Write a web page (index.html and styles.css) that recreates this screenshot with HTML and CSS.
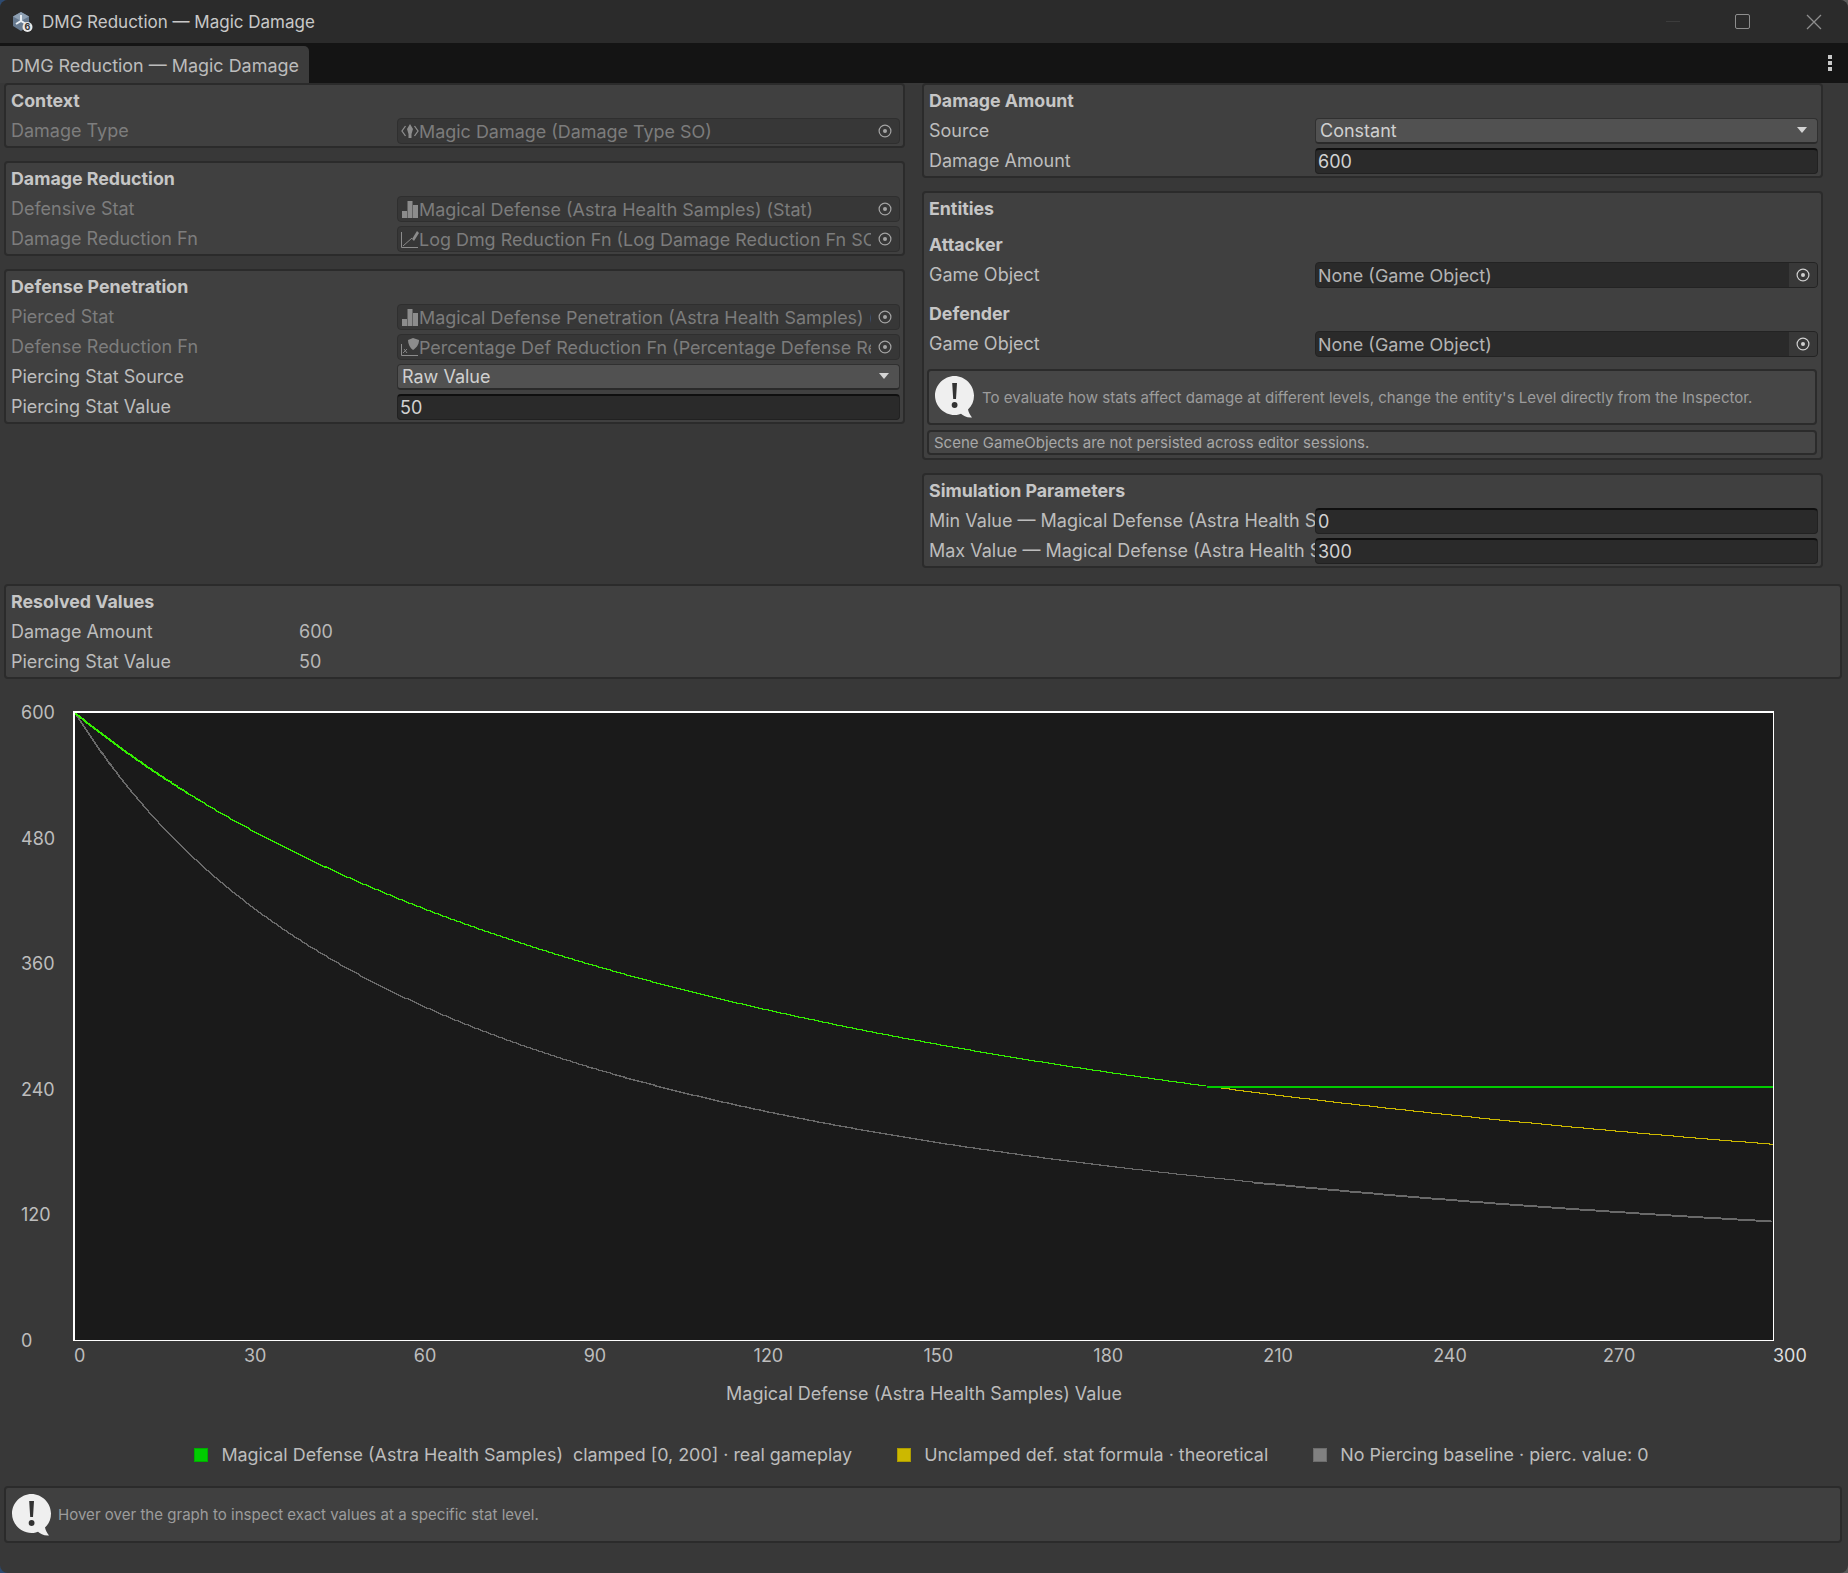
FILE: index.html
```html
<!DOCTYPE html>
<html lang="en">
<head>
    <meta charset="UTF-8">
    <title>DMG Reduction — Magic Damage</title>
    <link rel="stylesheet" href="styles.css">
</head>

<body>
<svg class="sprites" width="0" height="0">
    <symbol id="i-picker" viewBox="0 0 14 14">
        <circle cx="7" cy="7" r="5.9" fill="none" stroke="currentColor" stroke-width="1.2"/>
        <circle cx="7" cy="7" r="2" fill="currentColor"/>
    </symbol>
    <symbol id="i-bars" viewBox="0 0 16 18">
        <rect x="0" y="11" width="5" height="7" fill="currentColor"/>
        <rect x="5.5" y="1" width="5" height="17" fill="currentColor"/>
        <rect x="11" y="5" width="5" height="13" fill="currentColor"/>
    </symbol>
    <symbol id="i-type" viewBox="0 0 18 18">
        <path d="M4.5 4 L1 9 L4.5 14 M13.5 4 L17 9 L13.5 14" fill="none" stroke="currentColor" stroke-width="1.3"/>
        <path d="M9 2 L12 7 L10.5 12 L10.5 16 L7.5 16 L7.5 12 L6 7 Z" fill="currentColor"/>
    </symbol>
    <symbol id="i-graph" viewBox="0 0 18 18">
        <path d="M0.5 2 V17.5 H17" fill="none" stroke="currentColor" stroke-width="1"/>
        <path d="M2 16 L11 8" fill="none" stroke="currentColor" stroke-width="1"/>
        <path d="M11 9 L16 1 L18 3 L13 11 Z" fill="currentColor"/>
    </symbol>
    <symbol id="i-shield" viewBox="0 0 18 18">
        <path d="M0.5 6 V17.5 H17" fill="none" stroke="currentColor" stroke-width="1"/>
        <path d="M2 15 L6 11 M3 11 L6 15" fill="none" stroke="currentColor" stroke-width="0.9"/>
        <path d="M12 0 L18 2 C18 7 15 10 12 12 C9 10 7 6 7 2 Z" fill="currentColor"/>
    </symbol>
    <symbol id="i-help" viewBox="0 0 40 42">
        <path d="M19.5 0 C30 0 39 9 39 19.5 C39 25 37 30 33 33.5 C33.5 36 35 39 37 41.5 C32 42 28 39.5 26 37.8 C24 38.6 22 39 19.5 39 C9 39 0 30 0 19.5 C0 9 9 0 19.5 0 Z" fill="#efefef"/>
        <path d="M17.2 7 H22 L21 23 H18.2 Z" fill="#333"/>
        <circle cx="19.6" cy="29" r="2.9" fill="#333"/>
    </symbol>
</svg>

<div class="window">
    <div class="titlebar">
        <svg class="app-icon" viewBox="0 0 22 22">
            <path d="M10 1 L18 5.5 V15 L10 20 L2 15 V5.5 Z" fill="#66798f"/>
            <path d="M10 1 L18 5.5 L10 10 L2 5.5 Z" fill="#8ea0b3"/>
            <path d="M10 4 V10 M5 13 L10 10 L15 13" stroke="#e8edf2" stroke-width="2" fill="none"/>
            <circle cx="16.5" cy="16" r="5" fill="#e9e9e9"/>
            <text x="16.5" y="19.4" class="app-six">6</text>
        </svg>
        <span class="title-text">DMG Reduction — Magic Damage</span>
        <div class="win-buttons">
            <span class="win-min"></span>
            <span class="win-max"></span>
            <svg class="win-close" viewBox="0 0 16 16"><path d="M1 1 L15 15 M15 1 L1 15" stroke="#8e8e8e" stroke-width="1.3"/></svg>
        </div>
    </div>

    <div class="tabbar">
        <div class="tab">DMG Reduction — Magic Damage</div>
        <div class="kebab"><i></i><i></i><i></i></div>
    </div>

    <div class="columns">
        <div class="col">
            <div class="panel">
                <div class="heading">Context</div>
                <div class="row off">
                    <div class="label">Damage Type</div>
                    <div class="field object"><svg class="ficon"><use href="#i-type"/></svg><span class="ftext">Magic Damage (Damage Type SO)</span><svg class="picker"><use href="#i-picker"/></svg></div>
                </div>
            </div>
            <div class="panel">
                <div class="heading">Damage Reduction</div>
                <div class="row off">
                    <div class="label">Defensive Stat</div>
                    <div class="field object"><svg class="ficon"><use href="#i-bars"/></svg><span class="ftext">Magical Defense (Astra Health Samples) (Stat)</span><svg class="picker"><use href="#i-picker"/></svg></div>
                </div>
                <div class="row off">
                    <div class="label">Damage Reduction Fn</div>
                    <div class="field object"><svg class="ficon"><use href="#i-graph"/></svg><span class="ftext">Log Dmg Reduction Fn (Log Damage Reduction Fn SO)</span><svg class="picker"><use href="#i-picker"/></svg></div>
                </div>
            </div>
            <div class="panel">
                <div class="heading">Defense Penetration</div>
                <div class="row off">
                    <div class="label">Pierced Stat</div>
                    <div class="field object"><svg class="ficon"><use href="#i-bars"/></svg><span class="ftext">Magical Defense Penetration (Astra Health Samples) (Stat)</span><svg class="picker"><use href="#i-picker"/></svg></div>
                </div>
                <div class="row off">
                    <div class="label">Defense Reduction Fn</div>
                    <div class="field object"><svg class="ficon"><use href="#i-shield"/></svg><span class="ftext">Percentage Def Reduction Fn (Percentage Defense Reduction Fn SO)</span><svg class="picker"><use href="#i-picker"/></svg></div>
                </div>
                <div class="row">
                    <div class="label">Piercing Stat Source</div>
                    <div class="field dropdown">Raw Value<span class="caret"></span></div>
                </div>
                <div class="row">
                    <div class="label">Piercing Stat Value</div>
                    <div class="field input">50</div>
                </div>
            </div>
        </div>

        <div class="col">
            <div class="panel">
                <div class="heading">Damage Amount</div>
                <div class="row">
                    <div class="label">Source</div>
                    <div class="field dropdown">Constant<span class="caret"></span></div>
                </div>
                <div class="row">
                    <div class="label">Damage Amount</div>
                    <div class="field input">600</div>
                </div>
            </div>
            <div class="panel">
                <div class="heading">Entities</div>
                <div class="heading sub">Attacker</div>
                <div class="row">
                    <div class="label">Game Object</div>
                    <div class="field object live"><span class="ftext">None (Game Object)</span><svg class="picker"><use href="#i-picker"/></svg></div>
                </div>
                <div class="heading sub second">Defender</div>
                <div class="row">
                    <div class="label">Game Object</div>
                    <div class="field object live"><span class="ftext">None (Game Object)</span><svg class="picker"><use href="#i-picker"/></svg></div>
                </div>
                <div class="helpbox inner">
                    <svg class="help-icon"><use href="#i-help"/></svg>
                    <span>To evaluate how stats affect damage at different levels, change the entity's Level directly from the Inspector.</span>
                </div>
                <div class="notebox">Scene GameObjects are not persisted across editor sessions.</div>
            </div>
            <div class="panel">
                <div class="heading">Simulation Parameters</div>
                <div class="row">
                    <div class="label">Min Value — Magical Defense (Astra Health Samples)</div>
                    <div class="field input">0</div>
                </div>
                <div class="row">
                    <div class="label">Max Value — Magical Defense (Astra Health Samples)</div>
                    <div class="field input">300</div>
                </div>
            </div>
        </div>
    </div>

    <div class="panel resolved">
        <div class="heading">Resolved Values</div>
        <div class="row">
            <div class="label">Damage Amount</div>
            <div class="value">600</div>
        </div>
        <div class="row">
            <div class="label">Piercing Stat Value</div>
            <div class="value">50</div>
        </div>
    </div>

    <div class="chart">
        <div class="y-axis">
            <span>600</span><span>480</span><span>360</span><span>240</span><span>120</span><span>0</span>
        </div>
        <div class="plot">
            <svg id="graph" viewBox="0 0 1697 626" preserveAspectRatio="none">
                <polyline id="line-base" class="line line-base"/>
                <polyline id="line-free" class="line line-free"/>
                <polyline id="line-real" class="line line-real"/>
                <polyline id="line-flat" class="line line-flat"/>
            </svg>
        </div>
        <div class="x-axis">
            <span>0</span><span>30</span><span>60</span><span>90</span><span>120</span><span>150</span><span>180</span><span>210</span><span>240</span><span>270</span><span class="end">300</span>
        </div>
    </div>
    <div class="axis-title">Magical Defense (Astra Health Samples) Value</div>

    <div class="legend">
        <div class="key"><i class="swatch green"></i>Magical Defense (Astra Health Samples)&nbsp; clamped [0, 200] · real gameplay</div>
        <div class="key"><i class="swatch yellow"></i>Unclamped def. stat formula · theoretical</div>
        <div class="key"><i class="swatch gray"></i>No Piercing baseline · pierc. value: 0</div>
    </div>

    <div class="helpbox bottom">
        <svg class="help-icon"><use href="#i-help"/></svg>
        <span>Hover over the graph to inspect exact values at a specific stat level.</span>
    </div>
</div>
<script src="script.js"></script>
</body>
</html>
```

FILE: styles.css
```css
*{
    padding: 0;
    margin: 0;
    box-sizing: border-box;
}
html{
    height: 100%;
    background: linear-gradient(to right, #2d4a70, #5a5a5a);
}
body{
    height: 100%;
    overflow: hidden;
    font-family: "Inter", "Liberation Sans", sans-serif;
    font-size: 18px;
    color: #bdbdbd;
}
.sprites{
    position: absolute;
}
.window{
    height: 100%;
    background-color: #383838;
    border-radius: 8px;
    overflow: hidden;
}

/* title bar */
.titlebar{
    height: 43px;
    background-color: #2b2b2b;
    display: flex;
    align-items: center;
    padding-left: 11px;
}
.app-icon{
    width: 22px;
    height: 22px;
    margin-right: 9px;
}
.app-six{
    font-size: 9px;
    font-weight: 700;
    fill: #333;
    text-anchor: middle;
}
.title-text{
    color: #c8c8c8;
    font-size: 17px;
}
.win-buttons{
    margin-left: auto;
    display: flex;
    align-items: center;
    margin-right: 26px;
}
.win-min{
    width: 14px;
    height: 1px;
    background-color: #3c3c3c;
    margin-right: 55px;
}
.win-max{
    width: 15px;
    height: 15px;
    border: 1.4px solid #8e8e8e;
    border-radius: 2px;
    margin-right: 56px;
}
.win-close{
    width: 16px;
    height: 16px;
}

/* tabs */
.tabbar{
    height: 40px;
    background-color: #141414;
    display: flex;
    align-items: flex-end;
    justify-content: space-between;
}
.tab{
    height: 37px;
    width: 309px;
    background-color: #3c3c3c;
    border-radius: 0 5px 0 0;
    padding-left: 11px;
    line-height: 39px;
    color: #bcbcbc;
    font-size: 17.95px;
    white-space: nowrap;
}
.kebab{
    align-self: center;
    margin-right: 16px;
    display: flex;
    flex-direction: column;
    gap: 2px;
}
.kebab i{
    display: block;
    width: 4px;
    height: 4px;
    background-color: #c8c8c8;
}

/* inspector panels */
.columns{
    display: grid;
    grid-template-columns: 901px 901px;
    column-gap: 17px;
    padding-left: 4px;
}
.col{
    display: flex;
    flex-direction: column;
    gap: 13px;
}
.panel{
    background-color: #404040;
    border: 2px solid #2b2b2b;
    border-radius: 4px;
    padding: 1px 0 0;
}
.heading{
    height: 30px;
    line-height: 30px;
    padding-left: 5px;
    font-size: 17.8px;
    font-weight: 700;
    color: #c6c6c6;
}
.heading.sub{
    margin-top: 6px;
}
.heading.sub.second{
    margin-top: 9px;
}
.row{
    height: 30px;
    display: flex;
    align-items: center;
    padding-left: 5px;
    padding-right: 3px;
}
.label{
    flex: 0 0 386px;
    white-space: nowrap;
    overflow: hidden;
    padding-bottom: 2px;
}
.row.off .label{
    color: #7d7d7d;
}
.field{
    flex: 1;
    min-width: 0;
    height: 26px;
    border-radius: 4px;
    display: flex;
    align-items: center;
    white-space: nowrap;
}
.field.object{
    background-color: #373737;
    border: 1px solid #2f2f2f;
    color: #7c7c7c;
    padding-left: 3px;
    font-size: 17.95px;
}
.field.object .ficon{
    flex: 0 0 18px;
    height: 18px;
    color: #8c8c8c;
}
.field.object .ftext{
    flex: 1;
    min-width: 0;
    overflow: hidden;
}
.field.object .picker{
    flex: 0 0 28px;
    height: 14px;
    color: #a4a4a4;
}
.field.live{
    background-color: #2a2a2a;
    border-color: #232323;
    color: #b4b4b4;
    padding-left: 2px;
}
.field.live .picker{
    color: #d0d0d0;
    height: 24px;
    padding: 5px 0;
    background-color: #383838;
    border-radius: 0 3px 3px 0;
}
.dropdown{
    background-color: #515151;
    border: 1px solid #303030;
    border-bottom: 2px solid #2a2a2a;
    color: #d0d0d0;
    padding: 0 10px 1px 4px;
    justify-content: space-between;
}
.caret{
    width: 0;
    height: 0;
    border-left: 5px solid transparent;
    border-right: 5px solid transparent;
    border-top: 6px solid #d4d4d4;
}
.input{
    background-color: #2a2a2a;
    border: 1px solid #212121;
    border-top: 2px solid #0f0f0f;
    color: #d2d2d2;
    padding-left: 2px;
}
.helpbox{
    display: flex;
    align-items: center;
    background-color: #464646;
    border: 2px solid #2b2b2b;
    border-radius: 4px;
    font-size: 15.07px;
    color: #9c9c9c;
}
.help-icon{
    width: 40px;
    height: 42px;
    flex: 0 0 40px;
}
.helpbox.inner{
    height: 56px;
    margin: 10px 4px 0 3px;
    padding-left: 6px;
}
.helpbox.inner span{
    margin-left: 7px;
}
.notebox{
    height: 25px;
    line-height: 22px;
    margin: 5px 4px 3px 3px;
    padding-left: 5px;
    background-color: #464646;
    border: 2px solid #2b2b2b;
    border-radius: 4px;
    font-size: 15px;
    color: #a8a8a8;
}

/* resolved values */
.resolved{
    margin: 16px 6px 0 4px;
}
.resolved .label{
    flex-basis: 288px;
}
.value{
    color: #b8b8b8;
    padding-bottom: 2px;
}

/* chart */
.chart{
    display: grid;
    grid-template-columns: 73px 1701px;
    margin-top: 32px;
}
.y-axis{
    display: flex;
    flex-direction: column;
    justify-content: space-between;
    margin: -10px 0 -12px;
    padding-left: 21px;
    line-height: 24px;
}
.plot{
    height: 630px;
    background-color: #1a1a1a;
    border: 2px solid #fff;
    border-bottom-width: 1.5px;
    border-right-width: 1.5px;
}
#graph{
    display: block;
    width: 100%;
    height: 100%;
}
.line{
    fill: none;
    stroke-width: 1.5;
    shape-rendering: crispEdges;
}
.line-base{
    stroke: #6a6a6a;
}
.line-free{
    stroke: #ccb800;
}
.line-real{
    stroke: #33ee00;
}
.line-flat{
    stroke: #00cc00;
    stroke-width: 2;
}
.x-axis{
    grid-column: 2;
    display: flex;
    margin-top: 3px;
    line-height: 24px;
}
.x-axis span{
    flex: 0 0 169.9px;
    padding-left: 1px;
}
.x-axis .end{
    color: #dedede;
}
.axis-title{
    text-align: center;
    line-height: 24px;
    margin-top: 14px;
}
.legend{
    display: flex;
    justify-content: center;
    gap: 45px;
    margin-top: 37px;
    padding-right: 5px;
    line-height: 24px;
    font-size: 17.9px;
}
.key{
    display: flex;
    align-items: center;
    white-space: pre;
}
.swatch{
    width: 14px;
    height: 14px;
    margin-right: 13px;
    border: 1px solid rgba(0,0,0,.15);
}
.swatch.green{
    background-color: #00cc00;
}
.swatch.yellow{
    background-color: #ccb800;
}
.swatch.gray{
    background-color: #808080;
}
.helpbox.bottom{
    height: 57px;
    margin: 19px 6px 0 4px;
    background-color: #404040;
    padding-left: 6px;
}
.helpbox.bottom span{
    margin-left: 6px;
}
```

FILE: script.js
```js
// draws the three damage curves into the plot, one point per pixel column
var W=1697;
var H=626;
var MAX_X=300;
var MAX_Y=600;
var CLAMP=200;

function yPos(k,px) {
    var x=px/W*MAX_X;
    return Math.round(H-(MAX_Y/(1+x/k))/MAX_Y*H);
}

function curve(k,from,to) {
    var pts=[];
    var end=Math.round(to/MAX_X*W);
    for(var px=Math.round(from/MAX_X*W);px<=end;px+=2){
        pts.push(px+","+yPos(k,px));
    }
    return pts.join(" ");
}

document.getElementById("line-base").setAttribute("points",curve(70,0,300));
document.getElementById("line-free").setAttribute("points",curve(136,CLAMP,300));
document.getElementById("line-real").setAttribute("points",curve(136,0,CLAMP));

var startX=Math.round(CLAMP/MAX_X*W);
var flatY=yPos(136,startX);
document.getElementById("line-flat").setAttribute("points",startX+","+flatY+" "+W+","+flatY);
```
